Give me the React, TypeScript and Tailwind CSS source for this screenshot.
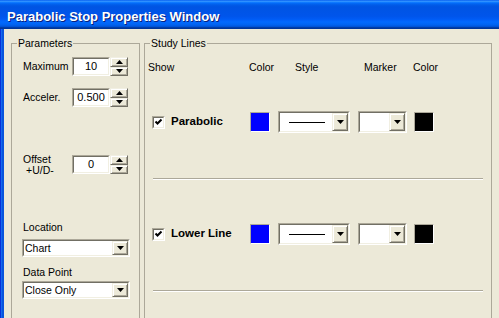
import React from 'react';

// Win XP classic-style controls for the properties dialog

const Arrow = ({ up = false, w = 7, h = 4 }: { up?: boolean; w?: number; h?: number }) => (
  <svg width={w} height={h} viewBox={`0 0 ${w} ${h}`} className="block">
    <path d={up ? `M0 ${h}H${w}L${w / 2} 0Z` : `M0 0H${w}L${w / 2} ${h}Z`} fill="#000" />
  </svg>
);

const Raised = ({ children, className = '' }: { children?: React.ReactNode; className?: string }) => (
  <div
    className={`flex items-center justify-center bg-[#ECE9D8] border border-t-[#F1EFE2] border-l-[#F1EFE2] border-b-[#716F64] border-r-[#716F64] shadow-[inset_1px_1px_0_#ffffff,inset_-1px_-1px_0_#ACA899] ${className}`}
  >
    {children}
  </div>
);

const Sunken = ({ children, className = '' }: { children?: React.ReactNode; className?: string }) => (
  <div className={`border border-t-[#ACA899] border-l-[#ACA899] border-b-white border-r-white ${className}`}>
    <div className="h-full flex border border-t-[#716F64] border-l-[#716F64] border-b-[#F1EFE2] border-r-[#F1EFE2] bg-white">
      {children}
    </div>
  </div>
);

function Spinner({ value }: { value: string }) {
  return (
    <div className="flex h-[19px]">
      <Sunken className="w-[38px] h-full">
        <div className="flex-1 flex items-center justify-center leading-none text-[11px] text-black">{value}</div>
      </Sunken>
      <div className="flex flex-col w-[18px] h-full">
        <Raised className="flex-1">
          <Arrow up w={7} h={4} />
        </Raised>
        <Raised className="flex-1">
          <Arrow w={7} h={4} />
        </Raised>
      </div>
    </div>
  );
}

function Combo({ text, line, className = '' }: { text?: string; line?: boolean; className?: string }) {
  return (
    <Sunken className={className}>
      <div className="flex-1 flex items-center pl-[1px] overflow-hidden whitespace-nowrap leading-none">
        {line && <div className="ml-[8px] w-[36px] h-px bg-black" />}
        {text}
      </div>
      <Raised className="w-[16px] h-full">
        <Arrow />
      </Raised>
    </Sunken>
  );
}

const Swatch = ({ color }: { color: string }) => (
  <div className={`w-[20px] h-[20px] border border-t-[#ACA899] border-l-[#ACA899] border-b-white border-r-white ${color}`} />
);

const CheckBox = () => (
  <div className="w-[13px] h-[13px] border border-t-[#ACA899] border-l-[#ACA899] border-b-white border-r-white">
    <div className="w-full h-full bg-white border border-t-[#716F64] border-l-[#716F64] border-b-[#F1EFE2] border-r-[#F1EFE2]">
      <svg width="9" height="9" viewBox="0 0 9 9" className="block">
        <path d="M1.5 3.5L3.5 5.5L7.5 1.5" stroke="#000" strokeWidth="2" fill="none" />
      </svg>
    </div>
  </div>
);

function StudyRow({ name }: { name: string }) {
  return (
    <div className="flex items-center h-[22px] pl-[7px]">
      <CheckBox />
      <span className="ml-[6px] w-[79px] font-bold text-[11.5px]">{name}</span>
      <Swatch color="bg-[#0000FF]" />
      <Combo line className="ml-[8px] w-[72px] h-[22px]" />
      <Combo className="ml-[8px] w-[49px] h-[22px]" />
      <div className="ml-[7px]">
        <Swatch color="bg-black" />
      </div>
    </div>
  );
}

const Separator = () => <div className="ml-[8px] w-[330px] h-[2px] border-t border-t-[#ACA899] border-b border-b-white" />;

export default function App() {
  return (
    <div className="w-[499px] h-[318px] overflow-hidden flex flex-col font-['Liberation_Sans',Arial,sans-serif] text-[10.5px] text-black">
      {/* Title bar */}
      <div className="h-[29px] shrink-0 pl-[7px] pt-[9px] bg-[linear-gradient(to_bottom,#0058EE_0%,#3593FF_4%,#288EFF_6%,#127DFF_8%,#036FFC_10%,#0262EE_14%,#0057E5_20%,#0054E3_24%,#0055EB_56%,#005BF5_66%,#026AFE_76%,#0062EF_86%,#0052D6_92%,#0040AB_94%,#003092_100%)]">
        <div className="text-white font-bold text-[13px] leading-[15px] [text-shadow:1px_1px_0_#0A1F7A]">
          Parabolic Stop Properties Window
        </div>
      </div>

      <div className="flex flex-1">
        <div className="w-[4px] bg-[linear-gradient(to_right,#0831D9_0px,#0831D9_1px,#166AEE_1px,#166AEE_2px,#0855DD_2px)]" />
        <div className="flex-1 flex gap-[4px] pl-[7px] pt-[8px] bg-[#ECE9D8]">
          {/* Parameters */}
          <fieldset className="w-[129px] h-[300px] shrink-0 border border-[#ACA899]">
            <legend className="ml-[5px] px-[1px] leading-[12px]">Parameters</legend>
            <div className="flex flex-col pl-[11px]">
              <div className="mt-[8px] flex items-center">
                <span className="w-[49px]">Maximum</span>
                <Spinner value="10" />
              </div>
              <div className="mt-[12px] flex items-center">
                <span className="w-[49px]">Acceler.</span>
                <Spinner value="0.500" />
              </div>
              <div className="mt-[46px] flex items-center">
                <div className="w-[49px] leading-[11px] pt-[1px]">
                  <div>Offset</div>
                  <div className="pl-[3px]">+U/D-</div>
                </div>
                <Spinner value="0" />
              </div>
              <div className="mt-[45px] leading-[12px]">Location</div>
              <Combo text="Chart" className="mt-[6px] -ml-px w-[108px] h-[18px]" />
              <div className="mt-[9px] leading-[12px]">Data Point</div>
              <Combo text="Close Only" className="mt-[3px] -ml-px w-[108px] h-[18px]" />
            </div>
          </fieldset>

          {/* Study Lines */}
          <fieldset className="w-[348px] h-[300px] shrink-0 border border-[#ACA899]">
            <legend className="ml-[5px] px-[1px] leading-[12px]">Study Lines</legend>
            <div className="flex flex-col">
              <div className="mt-[12px] flex pl-[3px] leading-[12px]">
                <span className="w-[101px]">Show</span>
                <span className="w-[46px]">Color</span>
                <span className="w-[69px]">Style</span>
                <span className="w-[49px]">Marker</span>
                <span>Color</span>
              </div>
              <div className="mt-[38px]">
                <StudyRow name="Parabolic" />
              </div>
              <div className="mt-[45px]">
                <Separator />
              </div>
              <div className="mt-[43px]">
                <StudyRow name="Lower Line" />
              </div>
              <div className="mt-[45px]">
                <Separator />
              </div>
            </div>
          </fieldset>
        </div>
      </div>
    </div>
  );
}
